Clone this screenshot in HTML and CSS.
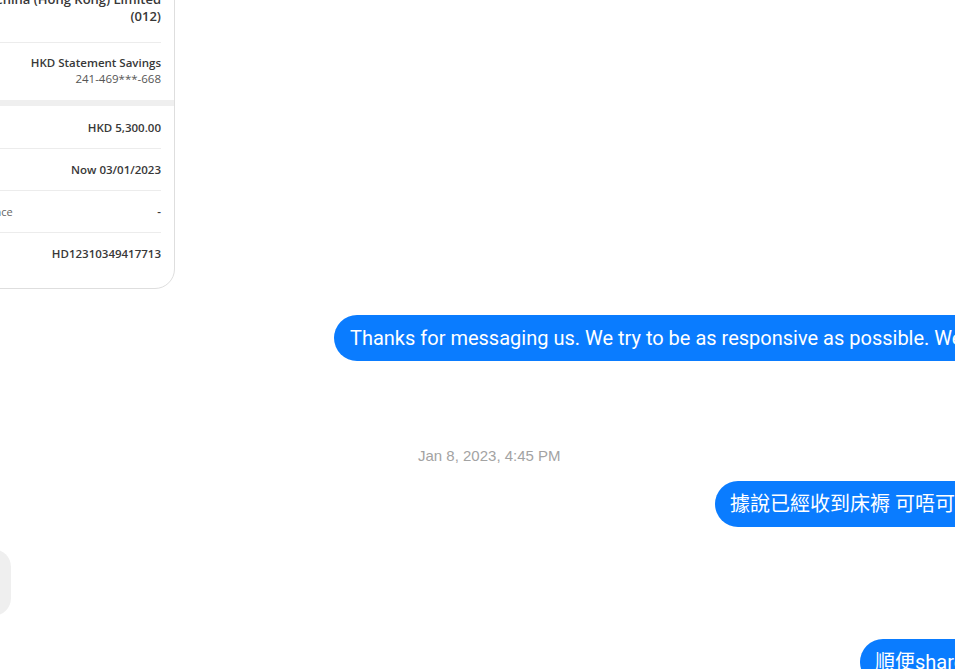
FILE: index.html
```html
<!DOCTYPE html>
<html>
<head>
<meta charset="utf-8">
<link rel="stylesheet" href="styles.css">
</head>
<body>
<div class="page">
  <div class="card">
    <div class="inner">
      <div class="block bank">
        <span class="lbl">To</span>
        <div class="val">Bank of<br>China (Hong Kong) Limited<br>(012)</div>
      </div>
      <div class="block acct">
        <div class="val">HKD Statement Savings</div>
        <div class="sub">241-469***-668</div>
      </div>
    </div>
    <div class="band"></div>
    <div class="inner">
      <div class="row"><span class="lbl">Total</span><span class="val">HKD 5,300.00</span></div>
      <div class="row"><span class="lbl">Date</span><span class="val">Now 03/01/2023</span></div>
      <div class="row"><span class="lbl">Reference</span><span class="val">-</span></div>
      <div class="row"><span class="lbl">Txn ID</span><span class="val">HD12310349417713</span></div>
    </div>
  </div>

  <div class="chat">
    <div class="msg m1"><div class="bubble">Thanks for messaging us. We try to be as responsive as possible. We'll get back to you soon.</div></div>
    <div class="stamp">Jan 8, 2023, 4:45 PM</div>
    <div class="msg m2"><div class="bubble">據說已經收到床褥 可唔可以安排送貨</div></div>
    <div class="msg m3"><div class="grey"></div></div>
    <div class="msg m4"><div class="bubble">順便share埋張單</div></div>
  </div>
</div>
</body>
</html>
```

FILE: styles.css
```css
html, body {
  margin: 0;
  padding: 0;
  overflow: hidden;
  background: #fff;
}
.page {
  width: 955px;
  height: 669px;
  overflow: hidden;
}
.card {
  box-sizing: border-box;
  width: 229px;
  margin-left: -54px;
  margin-top: -40px;
  padding-bottom: 14px;
  border: 1px solid #dedede;
  border-radius: 0 0 20px 20px;
  font-family: "Open Sans", "Liberation Sans", sans-serif;
  font-size: 11.5px;
  color: #383838;
  background: #fff;
}
.inner {
  margin: 0 13px 0 14px;
}
.block {
  text-align: right;
  border-bottom: 1px solid #ececec;
}
.bank {
  display: flex;
  justify-content: space-between;
  padding: 13px 0 17px;
  font-size: 13px;
  line-height: 17px;
  white-space: nowrap;
}
.bank .val {
  font-weight: 600;
}
.acct {
  padding: 12px 0 13px;
  line-height: 16px;
  border-bottom: none;
}
.acct .val {
  font-weight: 600;
}
.sub {
  color: #555;
}
.band {
  height: 6px;
  background: #efefef;
}
.row {
  display: flex;
  justify-content: space-between;
  align-items: center;
  height: 41px;
  border-top: 1px solid #ececec;
  white-space: nowrap;
}
.row:first-child {
  border-top: none;
  height: 42px;
}
.lbl {
  color: #666;
  font-size: 11px;
}
.row .val {
  font-weight: 600;
}
.chat {
  font-family: Roboto, "Liberation Sans", "Noto Sans CJK TC", sans-serif;
}
.msg {
  display: flex;
  white-space: nowrap;
}
.bubble {
  flex: none;
  background: #0a7cff;
  color: #fff;
  font-size: 20px;
  line-height: 26px;
  padding: 10px 16px;
  border-radius: 23px;
  font-family: Roboto, "Noto Sans CJK TC", sans-serif;
}
.m1 {
  margin-top: 26px;
  padding-left: 334px;
}
.stamp {
  margin-top: 86px;
  padding-left: 418px;
  font-family: "Liberation Sans", Arial, sans-serif;
  font-size: 15px;
  line-height: 18px;
  color: #a3a3a3;
}
.m2 {
  margin-top: 16px;
  padding-left: 715px;
}
.m2 .bubble {
  padding-left: 15px;
}
.m3 {
  margin-top: 22px;
}
.grey {
  flex: none;
  width: 200px;
  height: 67px;
  margin-left: -189px;
  background: #efefef;
  border-radius: 18px;
}
.m4 {
  margin-top: 23px;
  padding-left: 860px;
}
.m4 .bubble {
  padding-left: 15px;
}
```
